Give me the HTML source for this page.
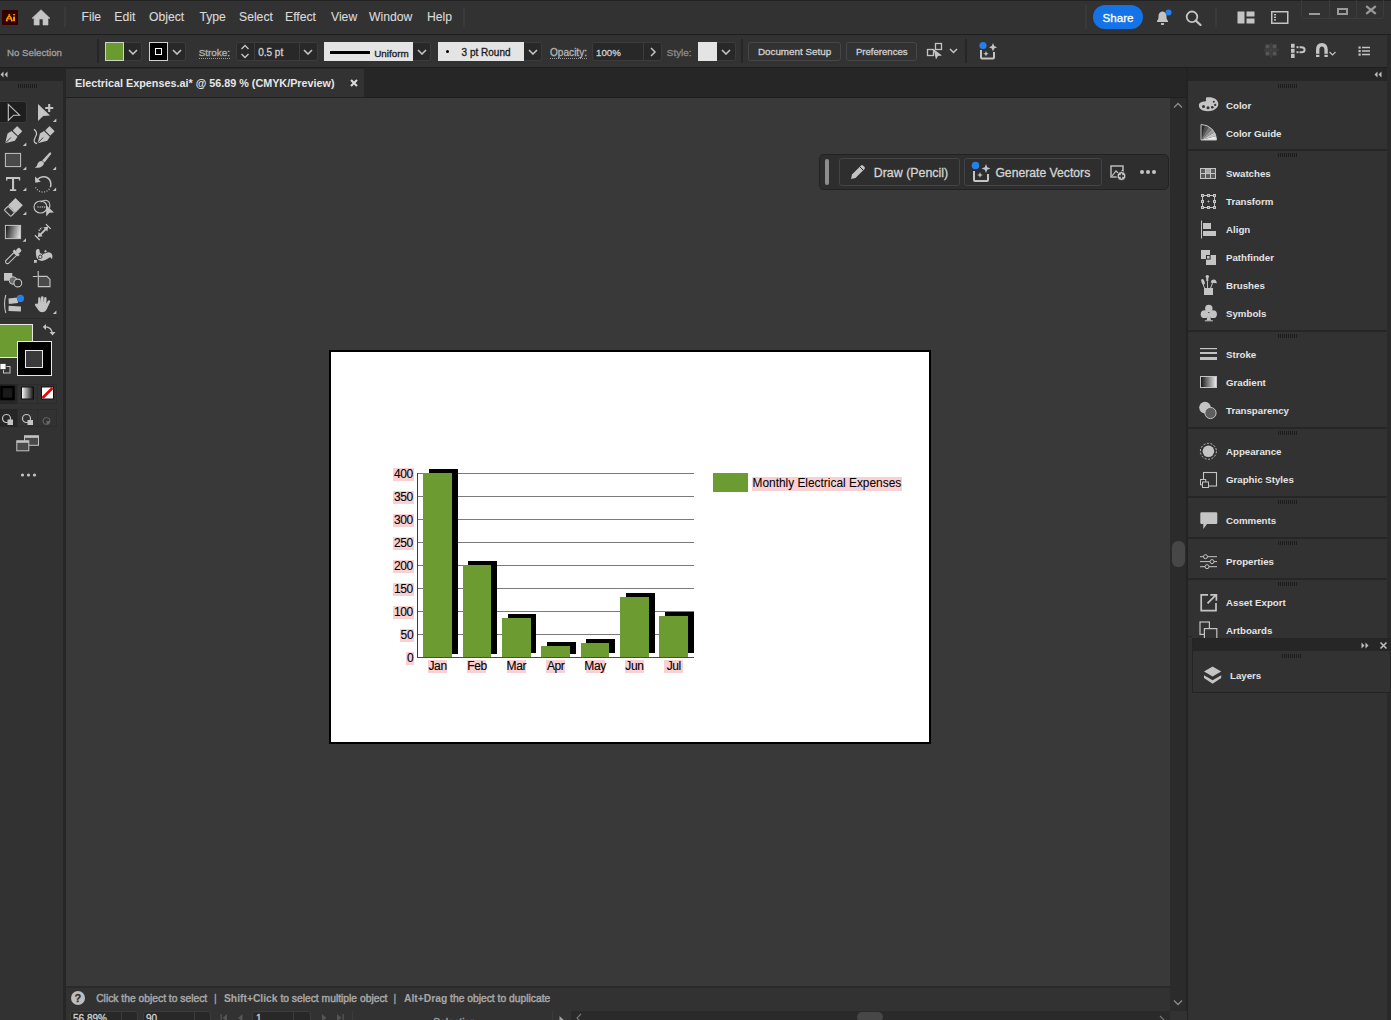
<!DOCTYPE html><html><head><meta charset="utf-8"><style>
html,body{margin:0;padding:0;}
body{width:1391px;height:1020px;overflow:hidden;position:relative;background:#323232;font-family:"Liberation Sans",sans-serif;}
body>div,body>span,body>svg{position:absolute;}
span.u{-webkit-text-stroke:0.3px currentColor;}
span{white-space:nowrap;}
</style></head><body>
<div style="left:0px;top:0px;width:1391px;height:34px;background:#323232;"></div>
<div style="left:0px;top:0px;width:1391px;height:1px;background:#222;"></div>
<div style="left:0px;top:34px;width:1391px;height:1px;background:#1e1e1e;"></div>
<svg style="left:2px;top:10px;" width="16" height="15" viewBox="0 0 16 15"><path d="M1 0 H15 Q16 0 16 1 V14.5 Q16 15 15 15 H1 Q0 15 0 14 V1 Q0 0 1 0 Z" fill="#330000"/><rect x="6.4" y="4.1" width="1.7" height="1.3" fill="#ff9a00"/><path d="M7.25 5.6 L5.2 8.2 L4.6 11.2 M7.25 5.6 L9.3 8.2 L9.9 11.2" fill="none" stroke="#ff9a00" stroke-width="1.5"/><rect x="5.3" y="8.3" width="3.9" height="1.1" fill="#ff9a00"/><rect x="3.8" y="10.2" width="1.8" height="1.1" fill="#ff9a00"/><rect x="8.9" y="10.2" width="1.8" height="1.1" fill="#ff9a00"/><rect x="11.1" y="4.1" width="2" height="1.2" fill="#ff9a00"/><rect x="11.1" y="6.6" width="1.9" height="4.6" fill="#ff9a00"/></svg>
<svg style="left:32px;top:9px;" width="19" height="17" viewBox="0 0 19 17"><path d="M9 0.7 L18 9.3 L16 9.3 L16 16 L11 16 L11 10 L7.2 10 L7.2 16 L2.1 16 L2.1 9.3 L0 9.3 Z" fill="#c4c4c4" stroke="#c4c4c4" stroke-width="0.6" stroke-linejoin="round"/></svg>
<div style="left:64px;top:7px;width:2px;height:20px;background:#3a3a3a;"></div>
<span class="u" style="left:81.5px;top:10.97px;font-size:12.2px;line-height:12.2px;color:#d9d9d9;font-weight:normal;font-family:'Liberation Sans', sans-serif;-webkit-text-stroke:0.12px #d9d9d9;">File</span>
<span class="u" style="left:114.3px;top:10.97px;font-size:12.2px;line-height:12.2px;color:#d9d9d9;font-weight:normal;font-family:'Liberation Sans', sans-serif;-webkit-text-stroke:0.12px #d9d9d9;">Edit</span>
<span class="u" style="left:149px;top:10.97px;font-size:12.2px;line-height:12.2px;color:#d9d9d9;font-weight:normal;font-family:'Liberation Sans', sans-serif;-webkit-text-stroke:0.12px #d9d9d9;">Object</span>
<span class="u" style="left:199.4px;top:10.97px;font-size:12.2px;line-height:12.2px;color:#d9d9d9;font-weight:normal;font-family:'Liberation Sans', sans-serif;-webkit-text-stroke:0.12px #d9d9d9;">Type</span>
<span class="u" style="left:239px;top:10.97px;font-size:12.2px;line-height:12.2px;color:#d9d9d9;font-weight:normal;font-family:'Liberation Sans', sans-serif;-webkit-text-stroke:0.12px #d9d9d9;">Select</span>
<span class="u" style="left:285px;top:10.97px;font-size:12.2px;line-height:12.2px;color:#d9d9d9;font-weight:normal;font-family:'Liberation Sans', sans-serif;-webkit-text-stroke:0.12px #d9d9d9;">Effect</span>
<span class="u" style="left:331px;top:10.97px;font-size:12.2px;line-height:12.2px;color:#d9d9d9;font-weight:normal;font-family:'Liberation Sans', sans-serif;-webkit-text-stroke:0.12px #d9d9d9;">View</span>
<span class="u" style="left:369px;top:10.97px;font-size:12.2px;line-height:12.2px;color:#d9d9d9;font-weight:normal;font-family:'Liberation Sans', sans-serif;-webkit-text-stroke:0.12px #d9d9d9;">Window</span>
<span class="u" style="left:427px;top:10.97px;font-size:12.2px;line-height:12.2px;color:#d9d9d9;font-weight:normal;font-family:'Liberation Sans', sans-serif;-webkit-text-stroke:0.12px #d9d9d9;">Help</span>
<div style="left:1085px;top:5px;width:2px;height:24px;background:#3a3a3a;"></div>
<div style="left:463px;top:7px;width:2px;height:20px;background:#3a3a3a;"></div>
<div style="left:1093px;top:5px;width:50px;height:24px;background:#1473e6;border-radius:12px;"></div>
<span class="u" style="left:1102.6px;top:12.18px;font-size:11.6px;line-height:11.6px;color:#ffffff;font-weight:normal;font-family:'Liberation Sans', sans-serif;">Share</span>
<svg style="left:1154px;top:9px;" width="18" height="17" viewBox="0 0 18 17"><path d="M3 13 L3 12 C4.5 10.5 4.5 9 4.5 7 C4.5 4 6.5 2.5 8.5 2.5 C10.5 2.5 12.5 4 12.5 7 C12.5 9 12.5 10.5 14 12 L14 13 Z" fill="#c4c4c4"/><rect x="6.8" y="14" width="3.4" height="2" rx="1" fill="#c4c4c4"/><circle cx="14.5" cy="3.5" r="3" fill="#2680eb"/></svg>
<svg style="left:1185px;top:10px;" width="18" height="16" viewBox="0 0 18 16"><circle cx="7" cy="6.8" r="5.3" fill="none" stroke="#c4c4c4" stroke-width="1.8"/><path d="M10.8 10.6 L15.5 15" stroke="#c4c4c4" stroke-width="2.2" stroke-linecap="round"/></svg>
<div style="left:1215px;top:7px;width:2px;height:20px;background:#3a3a3a;"></div>
<svg style="left:1237px;top:11px;" width="18" height="13" viewBox="0 0 18 13"><rect x="0.5" y="0.5" width="7" height="12" fill="#c4c4c4"/><rect x="9.5" y="0.5" width="8" height="5" fill="#c4c4c4"/><rect x="9.5" y="7.5" width="8" height="5" fill="#c4c4c4"/></svg>
<svg style="left:1271px;top:11px;" width="18" height="13" viewBox="0 0 18 13"><rect x="0.75" y="0.75" width="16" height="11.5" fill="none" stroke="#c4c4c4" stroke-width="1.5"/><rect x="3" y="3" width="2" height="1.4" fill="#c4c4c4"/><rect x="3" y="5.6" width="2" height="1.4" fill="#c4c4c4"/><rect x="3" y="8.2" width="2" height="1.4" fill="#c4c4c4"/></svg>
<div style="left:1301px;top:-1px;width:83px;height:20px;border:1px solid #3c3c3c;border-top:none;border-radius:0 0 4px 4px;box-sizing:border-box;"></div>
<div style="left:1329px;top:0px;width:1px;height:19px;background:#3c3c3c;"></div>
<div style="left:1356px;top:0px;width:1px;height:19px;background:#3c3c3c;"></div>
<div style="left:1309px;top:12.5px;width:11px;height:2px;background:#9a9a9a;"></div>
<div style="left:1337px;top:8px;width:11px;height:7px;border:2px solid #9a9a9a;box-sizing:border-box;"></div>
<svg style="left:1365px;top:5px;" width="12" height="10" viewBox="0 0 12 10"><path d="M1.2 1.2 L10.8 8.8 M10.8 1.2 L1.2 8.8" stroke="#9a9a9a" stroke-width="2.2"/></svg>
<div style="left:0px;top:35px;width:1391px;height:33px;background:#323232;"></div>
<div style="left:0px;top:67px;width:1391px;height:1px;background:#1e1e1e;"></div>
<div style="left:1387px;top:35px;width:4px;height:33px;background:#2a2a2a;"></div>
<span class="u" style="left:7px;top:47.69px;font-size:9.7px;line-height:9.7px;color:#a0a0a0;font-weight:normal;font-family:'Liberation Sans', sans-serif;">No Selection</span>
<div style="left:97px;top:39px;width:2px;height:24px;background:#262626;"></div>
<div style="left:105px;top:42px;width:19px;height:19px;background:#6a9a30;border:1px solid #d0d0d0;box-sizing:border-box;"></div>
<div style="left:124px;top:42px;width:18px;height:19px;background:#282828;border:1px solid #3c3c3c;border-left:none;border-radius:0 3px 3px 0;box-sizing:border-box;"></div>
<svg style="left:127.5px;top:48.5px;" width="10" height="6" viewBox="0 0 10 6"><path d="M1 1 L5 5 L9 1" fill="none" stroke="#c4c4c4" stroke-width="1.6"/></svg>
<div style="left:149px;top:42px;width:19px;height:19px;background:#000;border:1px solid #d0d0d0;box-sizing:border-box;"></div>
<div style="left:155px;top:48px;width:7px;height:7px;border:1.5px solid #fff;box-sizing:border-box;"></div>
<div style="left:168px;top:42px;width:18px;height:19px;background:#282828;border:1px solid #3c3c3c;border-left:none;border-radius:0 3px 3px 0;box-sizing:border-box;"></div>
<svg style="left:171.5px;top:48.5px;" width="10" height="6" viewBox="0 0 10 6"><path d="M1 1 L5 5 L9 1" fill="none" stroke="#c4c4c4" stroke-width="1.6"/></svg>
<span class="u" style="left:198.7px;top:47.72px;font-size:9.9px;line-height:9.9px;color:#b4b4b4;font-weight:normal;font-family:'Liberation Sans', sans-serif;">Stroke:</span>
<div style="left:199px;top:58px;width:31px;height:1px;border-top:1px dotted #9a9a9a;"></div>
<div style="left:236px;top:42px;width:82px;height:19px;background:#282828;border:1px solid #3c3c3c;border-radius:3px;box-sizing:border-box;"></div>
<div style="left:254px;top:42px;width:1px;height:19px;background:#3c3c3c;"></div>
<div style="left:299px;top:42px;width:1px;height:19px;background:#3c3c3c;"></div>
<svg style="left:240px;top:44px;" width="10" height="15" viewBox="0 0 10 15"><path d="M1.5 5 L5 1.5 L8.5 5 M1.5 10 L5 13.5 L8.5 10" fill="none" stroke="#c4c4c4" stroke-width="1.4"/></svg>
<span class="u" style="left:258.2px;top:47.53px;font-size:10px;line-height:10px;color:#d0d0d0;font-weight:normal;font-family:'Liberation Sans', sans-serif;">0.5 pt</span>
<svg style="left:303px;top:49px;" width="10" height="6" viewBox="0 0 10 6"><path d="M1 1 L5 5 L9 1" fill="none" stroke="#c4c4c4" stroke-width="1.6"/></svg>
<div style="left:324px;top:42px;width:89px;height:19px;background:#e4e4e4;"></div>
<div style="left:330px;top:51px;width:40px;height:3px;background:#000;"></div>
<span class="u" style="left:374.2px;top:48.62px;font-size:9.9px;line-height:9.9px;color:#1a1a1a;font-weight:normal;font-family:'Liberation Sans', sans-serif;">Uniform</span>
<div style="left:413px;top:42px;width:18px;height:19px;background:#282828;border:1px solid #3c3c3c;border-left:none;border-radius:0 3px 3px 0;box-sizing:border-box;"></div>
<svg style="left:416.5px;top:48.5px;" width="10" height="6" viewBox="0 0 10 6"><path d="M1 1 L5 5 L9 1" fill="none" stroke="#c4c4c4" stroke-width="1.6"/></svg>
<div style="left:438px;top:42px;width:86px;height:19px;background:#e4e4e4;"></div>
<div style="left:446px;top:50px;width:3px;height:3px;border-radius:50%;background:#000;"></div>
<span class="u" style="left:461.6px;top:48.03px;font-size:10px;line-height:10px;color:#1a1a1a;font-weight:normal;font-family:'Liberation Sans', sans-serif;">3 pt Round</span>
<div style="left:524px;top:42px;width:18px;height:19px;background:#282828;border:1px solid #3c3c3c;border-left:none;border-radius:0 3px 3px 0;box-sizing:border-box;"></div>
<svg style="left:527.5px;top:48.5px;" width="10" height="6" viewBox="0 0 10 6"><path d="M1 1 L5 5 L9 1" fill="none" stroke="#c4c4c4" stroke-width="1.6"/></svg>
<span class="u" style="left:550px;top:47.55px;font-size:10.1px;line-height:10.1px;color:#b4b4b4;font-weight:normal;font-family:'Liberation Sans', sans-serif;">Opacity:</span>
<div style="left:550px;top:58px;width:37px;height:1px;border-top:1px dotted #9a9a9a;"></div>
<div style="left:592px;top:42px;width:70px;height:19px;background:#282828;border:1px solid #3c3c3c;border-radius:3px;box-sizing:border-box;"></div>
<div style="left:643px;top:42px;width:1px;height:19px;background:#3c3c3c;"></div>
<span class="u" style="left:596px;top:47.79px;font-size:9.7px;line-height:9.7px;color:#d0d0d0;font-weight:normal;font-family:'Liberation Sans', sans-serif;">100%</span>
<svg style="left:649px;top:47px;" width="8" height="10" viewBox="0 0 8 10"><path d="M2 1 L6 5 L2 9" fill="none" stroke="#c4c4c4" stroke-width="1.5"/></svg>
<span class="u" style="left:666.8px;top:47.62px;font-size:9.9px;line-height:9.9px;color:#8c8c8c;font-weight:normal;font-family:'Liberation Sans', sans-serif;">Style:</span>
<div style="left:698px;top:42px;width:19px;height:19px;background:#e4e4e4;"></div>
<div style="left:717px;top:42px;width:19px;height:19px;background:#282828;border:1px solid #3c3c3c;border-left:none;border-radius:0 3px 3px 0;box-sizing:border-box;"></div>
<svg style="left:721.0px;top:48.5px;" width="10" height="6" viewBox="0 0 10 6"><path d="M1 1 L5 5 L9 1" fill="none" stroke="#c4c4c4" stroke-width="1.6"/></svg>
<div style="left:741px;top:39px;width:2px;height:24px;background:#262626;"></div>
<div style="left:748px;top:42px;width:93px;height:19px;border:1px solid #464646;border-radius:3px;box-sizing:border-box;"></div>
<span class="u" style="left:757.9px;top:46.96px;font-size:9.85px;line-height:9.85px;color:#d0d0d0;font-weight:normal;font-family:'Liberation Sans', sans-serif;">Document Setup</span>
<div style="left:846px;top:42px;width:71px;height:19px;border:1px solid #464646;border-radius:3px;box-sizing:border-box;"></div>
<span class="u" style="left:855.9px;top:47.27px;font-size:9.6px;line-height:9.6px;color:#d0d0d0;font-weight:normal;font-family:'Liberation Sans', sans-serif;">Preferences</span>
<svg style="left:926px;top:42px;" width="20" height="18" viewBox="0 0 20 18"><rect x="9.5" y="1.5" width="6" height="6" fill="none" stroke="#c4c4c4" stroke-width="1.3"/><rect x="1.5" y="7.5" width="6" height="6" fill="none" stroke="#c4c4c4" stroke-width="1.3"/><path d="M7.5 7 L16 13.5 L12 14 L10 17.5 Z" fill="#c4c4c4"/></svg>
<svg style="left:949px;top:48px;" width="9" height="6" viewBox="0 0 9 6"><path d="M1 1 L4.5 4.5 L8 1" fill="none" stroke="#c4c4c4" stroke-width="1.5"/></svg>
<div style="left:965px;top:39px;width:2px;height:24px;background:#262626;"></div>
<svg style="left:978px;top:41px;" width="22" height="19" viewBox="0 0 22 19"><path d="M3 9 L3 16.5 Q3 17.5 4 17.5 L15 17.5 Q16 17.5 16 16.5 L16 11" fill="none" stroke="#c4c4c4" stroke-width="2"/><path d="M15 2 L16.2 5 L19 6.2 L16.2 7.4 L15 10.4 L13.8 7.4 L11 6.2 L13.8 5 Z" fill="#c4c4c4"/><path d="M8 10 L8.8 12 L10.8 12.8 L8.8 13.6 L8 15.6 L7.2 13.6 L5.2 12.8 L7.2 12 Z" fill="#c4c4c4"/><circle cx="5" cy="4.5" r="3.6" fill="#2680eb"/></svg>
<svg style="left:1264px;top:43px;" width="15" height="15" viewBox="0 0 15 15"><rect x="1.5" y="1.5" width="4" height="4" fill="#555"/><rect x="8.5" y="1.5" width="4" height="4" fill="#555"/><rect x="1.5" y="8.5" width="4" height="4" fill="#555"/><rect x="8.5" y="8.5" width="4" height="4" fill="#555"/><path d="M0 7 H15 M7 0 V15" stroke="#4a4a4a" stroke-width="1"/></svg>
<svg style="left:1290px;top:43px;" width="16" height="16" viewBox="0 0 16 16"><rect x="1" y="0.8" width="3.6" height="4" fill="#c4c4c4"/><rect x="1" y="5.8" width="3.6" height="4" fill="#c4c4c4"/><rect x="1" y="10.8" width="3.6" height="4.2" fill="#c4c4c4"/><rect x="6.5" y="3.2" width="2" height="2" fill="#c4c4c4"/><rect x="6.5" y="8.2" width="2" height="2" fill="#c4c4c4"/><path d="M9.5 4.2 L11.5 4.2 Q14.6 4.2 14.6 6.7 Q14.6 9.2 11.5 9.2 L9.5 9.2" fill="none" stroke="#c4c4c4" stroke-width="2"/></svg>
<svg style="left:1315px;top:43px;" width="24" height="16" viewBox="0 0 24 16"><path d="M2.7 14 L2.7 7 Q2.7 1.8 6.9 1.8 Q11.1 1.8 11.1 7 L11.1 14" fill="none" stroke="#c4c4c4" stroke-width="3.4"/><rect x="0.5" y="10.8" width="4.4" height="1" fill="#323232"/><rect x="8.9" y="10.8" width="4.4" height="1" fill="#323232"/><path d="M14.5 9 L17.5 12 L20.5 9" fill="none" stroke="#c4c4c4" stroke-width="1.1"/></svg>
<svg style="left:1358px;top:46px;" width="13" height="10" viewBox="0 0 13 10"><rect x="0.5" y="0.5" width="2.2" height="2.2" fill="#c4c4c4"/><rect x="0.5" y="4" width="2.2" height="2.2" fill="#c4c4c4"/><rect x="0.5" y="7.5" width="2.2" height="2.2" fill="#c4c4c4"/><path d="M4 1.5 H12 M4 5 H12 M4 8.5 H12" stroke="#c4c4c4" stroke-width="1.3"/></svg>
<div style="left:0px;top:68px;width:1391px;height:30px;background:#262626;"></div>
<div style="left:66px;top:69px;width:298px;height:28px;background:#323232;"></div>
<span class="" style="left:75px;top:77.86px;font-size:10.8px;line-height:10.8px;color:#e6e6e6;font-weight:bold;font-family:'Liberation Sans', sans-serif;">Electrical Expenses.ai* @ 56.89 % (CMYK/Preview)</span>
<svg style="left:350px;top:79px;" width="8" height="8" viewBox="0 0 8 8"><path d="M1 1 L7 7 M7 1 L1 7" stroke="#dcdcdc" stroke-width="2.1"/></svg>
<div style="left:66px;top:97px;width:1121px;height:1px;background:#1e1e1e;"></div>
<div style="left:0px;top:68px;width:63px;height:13px;background:#262626;"></div>
<div style="left:0px;top:81px;width:63px;height:939px;background:#323232;"></div>
<div style="left:63px;top:68px;width:3px;height:952px;background:#262626;"></div>
<svg style="left:0px;top:71px;" width="8" height="7" viewBox="0 0 8 7"><path d="M3.5 0.5 L0.5 3.5 L3.5 6.5 Z M7.5 0.5 L4.5 3.5 L7.5 6.5 Z" fill="#bdbdbd"/></svg>
<svg style="left:18px;top:84px;" width="20" height="4" viewBox="0 0 20 4"><rect x="0" y="0" width="1" height="4" fill="#1c1c1c"/><rect x="2" y="0" width="1" height="4" fill="#1c1c1c"/><rect x="4" y="0" width="1" height="4" fill="#1c1c1c"/><rect x="6" y="0" width="1" height="4" fill="#1c1c1c"/><rect x="8" y="0" width="1" height="4" fill="#1c1c1c"/><rect x="10" y="0" width="1" height="4" fill="#1c1c1c"/><rect x="12" y="0" width="1" height="4" fill="#1c1c1c"/><rect x="14" y="0" width="1" height="4" fill="#1c1c1c"/><rect x="16" y="0" width="1" height="4" fill="#1c1c1c"/><rect x="18" y="0" width="1" height="4" fill="#1c1c1c"/></svg>
<div style="left:0px;top:101px;width:27px;height:22px;background:#1e1e1e;border:1px solid #3a3a3a;border-left:none;border-radius:0 3px 3px 0;box-sizing:border-box;"></div>
<svg style="left:0px;top:0px;" width="63" height="345" viewBox="0 0 63 345"><path d="M8.3 104.3 L19.6 115.2 L13.6 115.2 L8.3 120.5 Z" fill="none" stroke="#c4c4c4" stroke-width="1.1" stroke-linejoin="miter"/><path d="M38 104 L50 115.5 L43.2 116 L38 121 Z" fill="#c4c4c4"/><path d="M45.2 108 H53.2 M49.2 104 V112" stroke="#c4c4c4" stroke-width="2.1"/><path d="M52.8 122.0 L56.3 118.5 L56.3 122.0 Z" fill="#c4c4c4"/><g transform="translate(5.2,143.2) rotate(45)"><path d="M0 0 L-5.2 -8.5 L-4.2 -13.2 L4.2 -13.2 L5.2 -8.5 Z" fill="#c4c4c4"/><rect x="-3.6" y="-20.5" width="7.2" height="6.2" rx="0.6" fill="#c4c4c4"/><path d="M0 -0.5 L0 -8" stroke="#323232" stroke-width="0.9"/></g><path d="M22.8 145.9 L26.3 142.4 L26.3 145.9 Z" fill="#c4c4c4"/><g transform="translate(32,0)"><g transform="translate(5.6,143.2) rotate(45)"><path d="M0 0 L-5.2 -8.5 L-4.2 -13.2 L4.2 -13.2 L5.2 -8.5 Z" fill="#c4c4c4"/><rect x="-3.6" y="-20.5" width="7.2" height="6.2" rx="0.6" fill="#c4c4c4"/><path d="M0 -0.5 L0 -8" stroke="#323232" stroke-width="0.9"/></g></g><path d="M34 129.3 Q37 131.5 36.5 134.5 Q35 137.5 34.2 140 Q33.8 143 37 143.6" fill="none" stroke="#c4c4c4" stroke-width="1.2"/><rect x="5.4" y="153.4" width="15.2" height="13.2" fill="#4a4a4a" stroke="#c4c4c4" stroke-width="1"/><path d="M22.8 170.1 L26.3 166.6 L26.3 170.1 Z" fill="#c4c4c4"/><path d="M50.8 152.4 Q51.6 153.2 50.9 154.3 L44.6 162.4 L42.2 160.5 L49.4 152.8 Q50.2 152 50.8 152.4 Z" fill="#c4c4c4"/><path d="M42 161 L44 162.8 Q43.8 166.2 40 167.4 Q37.4 168 34.8 167.8 Q37.3 166.4 37.7 163.5 Q38.8 160.4 42 161 Z" fill="#c4c4c4"/><path d="M52.6 170.1 L56.1 166.6 L56.1 170.1 Z" fill="#c4c4c4"/><path d="M6 177 H20.2 V180.6 H18.8 V178.9 H14.1 V189.2 H16.2 V191 H9.9 V189.2 H12 V178.9 H7.4 V180.6 H6 Z" fill="#c4c4c4"/><path d="M22.8 190.9 L26.3 187.4 L26.3 190.9 Z" fill="#c4c4c4"/><path d="M36.5 180.5 Q40 176.5 44.5 176.8 Q50.2 177.6 50.8 183.6 Q51 185.5 50.3 187.2" fill="none" stroke="#c4c4c4" stroke-width="1.5"/><path d="M35 176.5 L35.2 182.7 L40.8 181.8 Z" fill="#c4c4c4"/><path d="M49.5 189 Q46 192.5 42 192 Q38 191.5 35.5 187.5" fill="none" stroke="#c4c4c4" stroke-width="1.2" stroke-dasharray="1 1.6"/><path d="M52.6 190.9 L56.1 187.4 L56.1 190.9 Z" fill="#c4c4c4"/><g transform="translate(13.2,207.6) rotate(45)"><rect x="-5.2" y="-8.4" width="10.4" height="10.4" fill="#c4c4c4"/><rect x="-4.6" y="2.6" width="9.2" height="5.4" rx="0.8" fill="#323232" stroke="#c4c4c4" stroke-width="1.1"/></g><path d="M22.8 215.1 L26.3 211.6 L26.3 215.1 Z" fill="#c4c4c4"/><ellipse cx="40.5" cy="207" rx="6.5" ry="6" fill="none" stroke="#c4c4c4" stroke-width="1.1"/><path d="M40.5 202 Q46 198.5 49 202 Q50.5 205 49.5 208" fill="none" stroke="#c4c4c4" stroke-width="1.1"/><circle cx="38" cy="207" r="0.7" fill="#c4c4c4"/><circle cx="40.2" cy="207" r="0.7" fill="#c4c4c4"/><circle cx="42.4" cy="207" r="0.7" fill="#c4c4c4"/><circle cx="44.6" cy="207" r="0.7" fill="#c4c4c4"/><path d="M46 205 L54 212.5 L49.5 212.7 L46.2 216.6 Z" fill="#c4c4c4"/><defs><linearGradient id="tg" x1="0" y1="0.3" x2="1" y2="0.5"><stop offset="0" stop-color="#1a1a1a"/><stop offset="1" stop-color="#e0e0e0"/></linearGradient></defs><rect x="5.4" y="225.4" width="15.2" height="13.2" fill="url(#tg)" stroke="#c4c4c4" stroke-width="1"/><path d="M22.5 241.7 L26.0 238.2 L26.0 241.7 Z" fill="#c4c4c4"/><path d="M34.9 235.2 L39.7 240 M45.9 224.1 L50.7 228.9" stroke="#c4c4c4" stroke-width="1.3"/><path d="M39.6 235.3 L46.4 228.5" stroke="#c4c4c4" stroke-width="1.8"/><path d="M48.2 226.6 L47.4 231.6 L43.3 227.5 Z M37.8 237.1 L38.6 232.1 L42.7 236.2 Z" fill="#c4c4c4"/><path d="M38.8 230.6 L41.9 227.5" stroke="#c4c4c4" stroke-width="1.6" stroke-dasharray="1.2 0.8"/><g transform="translate(13,256.2) rotate(45)"><rect x="-2.3" y="-10.5" width="4.6" height="5" rx="1.8" fill="#c4c4c4"/><rect x="-3.8" y="-5.8" width="7.6" height="2.6" fill="#c4c4c4"/><path d="M-1.9 -3.2 L1.9 -3.2 L1.9 8.5 Q0 11 -1.9 8.5 Z" fill="none" stroke="#c4c4c4" stroke-width="1.1"/></g><path d="M36.1 250.3 Q37 248.6 38.6 249 Q40 249.6 39.6 251.5 Q39.5 253.2 41.5 253.8 Q44 254 46 252.8 Q49 251.8 50.8 253 Q52.6 254 52.4 256.5 Q52.3 258.5 51.9 259.2 Q51 257.6 50.3 257.2 Q49 257.6 48 258.6 Q45.5 260.6 42 260.9 Q38.5 260.8 37.2 258.8 Q36 256.5 35.9 253.5 Q35.8 251.5 36.1 250.3 Z" fill="#c4c4c4"/><path d="M35.6 261.4 L45.3 251.6" stroke="#323232" stroke-width="0.9"/><circle cx="40.3" cy="256.8" r="1.7" fill="#c4c4c4" stroke="#323232" stroke-width="0.9"/><circle cx="45.5" cy="251.3" r="1.5" fill="#c4c4c4" stroke="#323232" stroke-width="0.8"/><rect x="34" y="260" width="2.8" height="2.8" fill="#c4c4c4"/><rect x="4" y="273" width="8.3" height="7.7" fill="#c4c4c4"/><circle cx="13" cy="280.5" r="3.8" fill="#6a6a6a" stroke="#c4c4c4" stroke-width="1"/><circle cx="17.8" cy="283" r="3.9" fill="#323232" stroke="#c4c4c4" stroke-width="1.1"/><path d="M38.2 271 V276 M32.8 276.5 H37.5" stroke="#c4c4c4" stroke-width="1.1"/><path d="M38.3 276.4 H47 L50 279.4 V286.6 H38.3 Z" fill="#4a4a4a" stroke="#c4c4c4" stroke-width="1.1"/><path d="M5.8 295 Q3.3 304 5.8 313" fill="none" stroke="#c4c4c4" stroke-width="1.1"/><path d="M8.5 298.6 L17.5 297.4 L18 303 L8.8 304 Z M8.6 305.8 L21 306.6 L20.9 311.6 L8.5 311 Z" fill="#c4c4c4"/><circle cx="20.4" cy="298.4" r="3.6" fill="#2680eb"/><path d="M38.2 302 L38.2 298.5 Q38.2 297.3 39.4 297.3 Q40.5 297.3 40.5 298.5 V303 L41 297.5 Q41 296.2 42.3 296.2 Q43.6 296.2 43.6 297.5 V303 L44.2 298 Q44.3 296.9 45.5 296.9 Q46.7 297 46.6 298.2 L46.4 303.8 L47.8 301 Q48.6 299.8 49.7 300.4 Q50.6 301 50 302.3 L46.6 309.6 Q45.5 312.2 42.4 312.2 Q39.5 312.2 38.3 310 L35 305.3 Q34.5 304.2 35.5 303.7 Q36.5 303.3 37.3 304.3 Z" fill="#c4c4c4"/><path d="M52.9 314.0 L56.4 310.5 L56.4 314.0 Z" fill="#c4c4c4"/><rect x="0" y="318" width="58" height="1" fill="#2a2a2a"/><path d="M44 327 Q51 326 52.5 333.5" fill="none" stroke="#c4c4c4" stroke-width="1.3"/><path d="M46 324 L42.8 327 L46 330 Z M49.5 332 L52.5 335.5 L55.5 332 Z" fill="#c4c4c4"/></svg>
<div style="left:0px;top:324px;width:33px;height:34px;background:#6b9b31;border:1px solid #e8e8e8;border-left:none;box-sizing:border-box;"></div>
<div style="left:17px;top:341px;width:35px;height:35px;background:#000;border:1px solid #e8e8e8;box-sizing:border-box;"></div>
<div style="left:25px;top:350px;width:18px;height:18px;background:#3a3a3a;border:1px solid #e8e8e8;box-sizing:border-box;"></div>
<svg style="left:0px;top:363px;" width="11" height="14" viewBox="0 0 11 14"><rect x="3.5" y="3.5" width="6.5" height="6.5" fill="#323232" stroke="#c4c4c4" stroke-width="1"/><rect x="0" y="0.5" width="6" height="6" fill="#fff" stroke="#323232" stroke-width="0.8"/></svg>
<div style="left:0px;top:384px;width:17px;height:20px;background:#262626;"></div>
<div style="left:0px;top:409px;width:17px;height:18px;background:#262626;"></div>
<div style="left:17px;top:384px;width:40px;height:20px;border:1px solid #2c2c2c;box-sizing:border-box;"></div>
<div style="left:17px;top:409px;width:40px;height:18px;border:1px solid #2c2c2c;box-sizing:border-box;"></div>
<div style="left:37px;top:384px;width:1px;height:20px;background:#2c2c2c;"></div>
<div style="left:37px;top:409px;width:1px;height:18px;background:#2c2c2c;"></div>
<svg style="left:0px;top:383px;" width="60" height="48" viewBox="0 0 60 48"><rect x="1.5" y="4" width="12" height="12" fill="#1a1a1a" stroke="#000" stroke-width="2.5"/><defs><linearGradient id="cm" x1="0" y1="0" x2="1" y2="0"><stop offset="0" stop-color="#fff"/><stop offset="1" stop-color="#111"/></linearGradient></defs><rect x="21.5" y="4" width="12" height="12" fill="url(#cm)" stroke="#111" stroke-width="1"/><rect x="41.5" y="4" width="12" height="12" fill="#fff" stroke="#111" stroke-width="1"/><path d="M42.5 15 L52.5 5" stroke="#e00" stroke-width="2.6"/><circle cx="6.5" cy="35.5" r="4" fill="none" stroke="#c4c4c4" stroke-width="1.2"/><rect x="7.5" y="36.5" width="5.5" height="5.5" fill="#c4c4c4"/><circle cx="26.5" cy="35.5" r="4" fill="none" stroke="#c4c4c4" stroke-width="1.2"/><path d="M27.5 37 H33 V42 H27.5 Z" fill="#c4c4c4"/><circle cx="46.5" cy="38" r="3.5" fill="none" stroke="#666" stroke-width="1"/><path d="M46.5 38 H50 A3.5 3.5 0 0 1 46.5 41.5 Z" fill="#666"/></svg>
<svg style="left:16px;top:435px;" width="24" height="17" viewBox="0 0 24 17"><rect x="8.5" y="0.8" width="14" height="9.5" fill="#4a4a4a" stroke="#c4c4c4" stroke-width="1"/><rect x="8.5" y="0.8" width="14" height="2" fill="#c4c4c4"/><rect x="0.8" y="5.8" width="12" height="10" fill="#4a4a4a" stroke="#c4c4c4" stroke-width="1"/><rect x="0.8" y="5.8" width="12" height="2" fill="#c4c4c4"/></svg>
<svg style="left:20px;top:472px;" width="17" height="6" viewBox="0 0 17 6"><circle cx="2.5" cy="3" r="1.6" fill="#c4c4c4"/><circle cx="8.5" cy="3" r="1.6" fill="#c4c4c4"/><circle cx="14.5" cy="3" r="1.6" fill="#c4c4c4"/></svg>
<div style="left:66px;top:98px;width:1104px;height:888px;background:#393939;"></div>
<div style="left:329px;top:350px;width:602px;height:394px;background:#000;"></div>
<div style="left:331px;top:352px;width:598px;height:390px;background:#fff;"></div>
<div style="left:418px;top:634px;width:276px;height:1px;background:#7a7a7a;"></div>
<div style="left:418px;top:611px;width:276px;height:1px;background:#7a7a7a;"></div>
<div style="left:418px;top:588px;width:276px;height:1px;background:#7a7a7a;"></div>
<div style="left:418px;top:565px;width:276px;height:1px;background:#7a7a7a;"></div>
<div style="left:418px;top:542px;width:276px;height:1px;background:#7a7a7a;"></div>
<div style="left:418px;top:519px;width:276px;height:1px;background:#7a7a7a;"></div>
<div style="left:418px;top:496px;width:276px;height:1px;background:#7a7a7a;"></div>
<div style="left:418px;top:473px;width:276px;height:1px;background:#7a7a7a;"></div>
<div style="left:428.90px;top:469.00px;width:28.8px;height:184.50px;background:#000;"></div>
<div style="left:452.20px;top:653.5px;width:5.5px;height:3px;background:#fff;"></div>
<div style="left:423.20px;top:473.00px;width:28.8px;height:184.00px;background:#6b9b31;"></div>
<div style="left:468.27px;top:561.00px;width:28.8px;height:92.50px;background:#000;"></div>
<div style="left:491.57px;top:653.5px;width:5.5px;height:3px;background:#fff;"></div>
<div style="left:462.57px;top:565.00px;width:28.8px;height:92.00px;background:#6b9b31;"></div>
<div style="left:507.64px;top:613.90px;width:28.8px;height:39.60px;background:#000;"></div>
<div style="left:530.94px;top:653.5px;width:5.5px;height:3px;background:#fff;"></div>
<div style="left:501.94px;top:617.90px;width:28.8px;height:39.10px;background:#6b9b31;"></div>
<div style="left:547.01px;top:641.50px;width:28.8px;height:12.00px;background:#000;"></div>
<div style="left:570.31px;top:653.5px;width:5.5px;height:3px;background:#fff;"></div>
<div style="left:541.31px;top:645.50px;width:28.8px;height:11.50px;background:#6b9b31;"></div>
<div style="left:586.38px;top:639.20px;width:28.8px;height:14.30px;background:#000;"></div>
<div style="left:609.68px;top:653.5px;width:5.5px;height:3px;background:#fff;"></div>
<div style="left:580.68px;top:643.20px;width:28.8px;height:13.80px;background:#6b9b31;"></div>
<div style="left:625.75px;top:593.20px;width:28.8px;height:60.30px;background:#000;"></div>
<div style="left:649.05px;top:653.5px;width:5.5px;height:3px;background:#fff;"></div>
<div style="left:620.05px;top:597.20px;width:28.8px;height:59.80px;background:#6b9b31;"></div>
<div style="left:665.12px;top:611.60px;width:28.8px;height:41.90px;background:#000;"></div>
<div style="left:688.42px;top:653.5px;width:5.5px;height:3px;background:#fff;"></div>
<div style="left:659.42px;top:615.60px;width:28.8px;height:41.40px;background:#6b9b31;"></div>
<div style="left:417px;top:473px;width:1.2px;height:185px;background:#3c3c3c;"></div>
<div style="left:417px;top:656.5px;width:277px;height:1.2px;background:#4a4a4a;"></div>
<div style="left:406.30px;top:652.00px;width:7.5px;height:13px;background:#f9d0d3;"></div>
<span style="left:406.30px;top:652.34px;width:7.5px;text-align:center;font-size:12px;line-height:12px;color:#000;letter-spacing:-0.35px;-webkit-text-stroke:0.1px #000;">0</span>
<div style="left:400.00px;top:629.00px;width:13.8px;height:13px;background:#f9d0d3;"></div>
<span style="left:400.00px;top:629.34px;width:13.8px;text-align:center;font-size:12px;line-height:12px;color:#000;letter-spacing:-0.35px;-webkit-text-stroke:0.1px #000;">50</span>
<div style="left:393.10px;top:606.00px;width:20.7px;height:13px;background:#f9d0d3;"></div>
<span style="left:393.10px;top:606.34px;width:20.7px;text-align:center;font-size:12px;line-height:12px;color:#000;letter-spacing:-0.35px;-webkit-text-stroke:0.1px #000;">100</span>
<div style="left:393.10px;top:583.00px;width:20.7px;height:13px;background:#f9d0d3;"></div>
<span style="left:393.10px;top:583.34px;width:20.7px;text-align:center;font-size:12px;line-height:12px;color:#000;letter-spacing:-0.35px;-webkit-text-stroke:0.1px #000;">150</span>
<div style="left:393.10px;top:560.00px;width:20.7px;height:13px;background:#f9d0d3;"></div>
<span style="left:393.10px;top:560.34px;width:20.7px;text-align:center;font-size:12px;line-height:12px;color:#000;letter-spacing:-0.35px;-webkit-text-stroke:0.1px #000;">200</span>
<div style="left:393.10px;top:537.00px;width:20.7px;height:13px;background:#f9d0d3;"></div>
<span style="left:393.10px;top:537.34px;width:20.7px;text-align:center;font-size:12px;line-height:12px;color:#000;letter-spacing:-0.35px;-webkit-text-stroke:0.1px #000;">250</span>
<div style="left:393.10px;top:514.00px;width:20.7px;height:13px;background:#f9d0d3;"></div>
<span style="left:393.10px;top:514.34px;width:20.7px;text-align:center;font-size:12px;line-height:12px;color:#000;letter-spacing:-0.35px;-webkit-text-stroke:0.1px #000;">300</span>
<div style="left:393.10px;top:491.00px;width:20.7px;height:13px;background:#f9d0d3;"></div>
<span style="left:393.10px;top:491.34px;width:20.7px;text-align:center;font-size:12px;line-height:12px;color:#000;letter-spacing:-0.35px;-webkit-text-stroke:0.1px #000;">350</span>
<div style="left:393.10px;top:468.00px;width:20.7px;height:13px;background:#f9d0d3;"></div>
<span style="left:393.10px;top:468.34px;width:20.7px;text-align:center;font-size:12px;line-height:12px;color:#000;letter-spacing:-0.35px;-webkit-text-stroke:0.1px #000;">400</span>
<div style="left:428.10px;top:660px;width:19px;height:13px;background:#f9d0d3;"></div>
<span style="left:422.60px;top:660.24px;width:30px;text-align:center;font-size:12px;line-height:12px;color:#000;letter-spacing:-0.4px;-webkit-text-stroke:0.1px #000;">Jan</span>
<div style="left:467.47px;top:660px;width:19px;height:13px;background:#f9d0d3;"></div>
<span style="left:461.97px;top:660.24px;width:30px;text-align:center;font-size:12px;line-height:12px;color:#000;letter-spacing:-0.4px;-webkit-text-stroke:0.1px #000;">Feb</span>
<div style="left:506.84px;top:660px;width:19px;height:13px;background:#f9d0d3;"></div>
<span style="left:501.34px;top:660.24px;width:30px;text-align:center;font-size:12px;line-height:12px;color:#000;letter-spacing:-0.4px;-webkit-text-stroke:0.1px #000;">Mar</span>
<div style="left:546.21px;top:660px;width:19px;height:13px;background:#f9d0d3;"></div>
<span style="left:540.71px;top:660.24px;width:30px;text-align:center;font-size:12px;line-height:12px;color:#000;letter-spacing:-0.4px;-webkit-text-stroke:0.1px #000;">Apr</span>
<div style="left:585.58px;top:660px;width:19px;height:13px;background:#f9d0d3;"></div>
<span style="left:580.08px;top:660.24px;width:30px;text-align:center;font-size:12px;line-height:12px;color:#000;letter-spacing:-0.4px;-webkit-text-stroke:0.1px #000;">May</span>
<div style="left:624.95px;top:660px;width:19px;height:13px;background:#f9d0d3;"></div>
<span style="left:619.45px;top:660.24px;width:30px;text-align:center;font-size:12px;line-height:12px;color:#000;letter-spacing:-0.4px;-webkit-text-stroke:0.1px #000;">Jun</span>
<div style="left:664.32px;top:660px;width:19px;height:13px;background:#f9d0d3;"></div>
<span style="left:658.82px;top:660.24px;width:30px;text-align:center;font-size:12px;line-height:12px;color:#000;letter-spacing:-0.4px;-webkit-text-stroke:0.1px #000;">Jul</span>
<div style="left:713px;top:473px;width:35px;height:18.6px;background:#6b9b31;"></div>
<div style="left:752px;top:477px;width:150px;height:14px;background:#f9d0d3;"></div>
<span class="" style="left:752.5px;top:477.93px;font-size:11.9px;line-height:11.9px;color:#000;font-weight:normal;font-family:'Liberation Sans', sans-serif;-webkit-text-stroke:0.05px #000;">Monthly Electrical Expenses</span>
<div style="left:1170px;top:98px;width:17px;height:913px;background:#2b2b2b;"></div>
<div style="left:1186px;top:68px;width:2px;height:952px;background:#232323;"></div>
<div style="left:66px;top:986px;width:1104px;height:2px;background:#2a2a2a;"></div>
<div style="left:66px;top:988px;width:1104px;height:23px;background:#323232;"></div>
<div style="left:1170px;top:1011px;width:17px;height:9px;background:#323232;"></div>
<div style="left:1188px;top:68px;width:200px;height:13px;background:#262626;"></div>
<div style="left:1188px;top:81px;width:199px;height:939px;background:#323232;"></div>
<div style="left:1387px;top:68px;width:4px;height:952px;background:#2a2a2a;"></div>
<svg style="left:1194px;top:90px;" width="30" height="548" viewBox="0 0 30 548"><g transform="translate(-1194,-90)"><path d="M1207 97.3 C1212.5 96.5 1218.3 99 1218.3 104 C1218.3 108.7 1213 111.2 1208 111.2 C1202 111.2 1198.9 108.7 1198.9 105.6 C1198.9 102.6 1202 101.6 1204.5 101.6 C1205.9 101.6 1206.4 100.6 1206 99.6 C1205.7 98.6 1206 97.5 1207 97.3 Z" fill="#c4c4c4"/><circle cx="1203.5" cy="106.4" r="1.5" fill="#323232"/><circle cx="1208" cy="107.7" r="1.5" fill="#323232"/><circle cx="1212.3" cy="107.2" r="1.3" fill="#323232"/><circle cx="1215.2" cy="104.9" r="1.1" fill="#323232"/><circle cx="1213.8" cy="101.7" r="1" fill="#323232"/><path d="M1201 140 L1216.50 140.00 A15.5 15.5 0 0 0 1215.97 135.99 Z" fill="rgb(235,235,235)"/><path d="M1201 140 L1215.97 135.99 A15.5 15.5 0 0 0 1214.42 132.25 Z" fill="rgb(197,197,197)"/><path d="M1201 140 L1214.42 132.25 A15.5 15.5 0 0 0 1211.96 129.04 Z" fill="rgb(159,159,159)"/><path d="M1201 140 L1211.96 129.04 A15.5 15.5 0 0 0 1208.75 126.58 Z" fill="rgb(121,121,121)"/><path d="M1201 140 L1208.75 126.58 A15.5 15.5 0 0 0 1205.01 125.03 Z" fill="rgb(83,83,83)"/><path d="M1201 140 L1205.01 125.03 A15.5 15.5 0 0 0 1201.00 124.50 Z" fill="rgb(45,45,45)"/><path d="M1201 124.5 L1201 140 L1216.5 140 A15.5 15.5 0 0 0 1201 124.5 Z" fill="none" stroke="#c4c4c4" stroke-width="1"/><rect x="1200" y="168" width="16" height="11" fill="#c4c4c4"/><rect x="1201" y="169" width="4" height="4" fill="#5a5a5a"/><rect x="1206" y="169" width="4" height="4" fill="#a8a8a8"/><rect x="1211" y="169" width="4" height="4" fill="#5a5a5a"/><rect x="1201" y="174" width="4" height="4" fill="#5a5a5a"/><rect x="1206" y="174" width="4" height="4" fill="#5a5a5a"/><rect x="1211" y="174" width="4" height="4" fill="#5a5a5a"/><rect x="1202.5" y="195.5" width="12" height="12" fill="none" stroke="#c4c4c4" stroke-width="1"/><rect x="1201" y="194" width="3" height="3" fill="#c4c4c4"/><rect x="1202" y="195" width="1" height="1" fill="#777"/><rect x="1201" y="200" width="3" height="3" fill="#c4c4c4"/><rect x="1202" y="201" width="1" height="1" fill="#777"/><rect x="1201" y="206" width="3" height="3" fill="#c4c4c4"/><rect x="1202" y="207" width="1" height="1" fill="#777"/><rect x="1207" y="194" width="3" height="3" fill="#c4c4c4"/><rect x="1208" y="195" width="1" height="1" fill="#777"/><rect x="1207" y="206" width="3" height="3" fill="#c4c4c4"/><rect x="1208" y="207" width="1" height="1" fill="#777"/><rect x="1213" y="194" width="3" height="3" fill="#c4c4c4"/><rect x="1214" y="195" width="1" height="1" fill="#777"/><rect x="1213" y="200" width="3" height="3" fill="#c4c4c4"/><rect x="1214" y="201" width="1" height="1" fill="#777"/><rect x="1213" y="206" width="3" height="3" fill="#c4c4c4"/><rect x="1214" y="207" width="1" height="1" fill="#777"/><path d="M1207.5 201.5 H1209.5 M1208.5 200.5 V202.5" stroke="#c4c4c4" stroke-width="0.8"/><rect x="1201" y="220.5" width="1" height="18" fill="#c4c4c4"/><rect x="1203" y="223" width="8" height="6" fill="#c4c4c4"/><rect x="1203" y="231" width="13" height="5" fill="#c4c4c4"/><rect x="1201" y="250" width="9" height="9" fill="#c4c4c4"/><rect x="1206" y="255" width="10" height="10" fill="#c4c4c4"/><rect x="1206.5" y="255.5" width="3.6" height="3.6" fill="none" stroke="#2a2a2a" stroke-width="1"/><rect x="1204" y="288" width="9" height="7" fill="#c4c4c4"/><path d="M1204.5 288 L1203 284 M1207.6 288 L1207.3 278 M1210.6 288 L1212.5 283" stroke="#c4c4c4" stroke-width="1"/><ellipse cx="1203" cy="281.8" rx="1.6" ry="3" transform="rotate(-20 1203 281.8)" fill="#c4c4c4"/><circle cx="1207.3" cy="276.6" r="1.7" fill="#c4c4c4"/><rect x="1206.3" y="277.5" width="2" height="3.5" fill="#c4c4c4"/><path d="M1210.8 282.8 Q1211 279.5 1213.8 279.5 Q1216.5 279.8 1216.8 283.2 Z" fill="#c4c4c4"/><circle cx="1208.8" cy="308.4" r="3.7" fill="#c4c4c4"/><circle cx="1204.6" cy="314.2" r="3.9" fill="#c4c4c4"/><circle cx="1213" cy="314.2" r="3.9" fill="#c4c4c4"/><path d="M1208 313 L1206.6 320.4 L1211 320.4 L1209.6 313 Z" fill="#c4c4c4"/><rect x="1204.8" y="320.3" width="8.1" height="1" fill="#c4c4c4"/><rect x="1200" y="348" width="17" height="1.2" fill="#c4c4c4"/><rect x="1200" y="352" width="17" height="2" fill="#c4c4c4"/><rect x="1200" y="357" width="17" height="3" fill="#c4c4c4"/><defs><linearGradient id="pg" x1="0" y1="0" x2="1" y2="0"><stop offset="0" stop-color="#111"/><stop offset="1" stop-color="#f0f0f0"/></linearGradient></defs><rect x="1200.5" y="376.5" width="16" height="11" fill="url(#pg)" stroke="#c4c4c4" stroke-width="1"/><circle cx="1205" cy="407.6" r="5.8" fill="#c4c4c4"/><circle cx="1210.5" cy="413" r="5.6" fill="#5e5e5e" stroke="#c4c4c4" stroke-width="1"/><circle cx="1208.4" cy="451.3" r="8" fill="none" stroke="#c4c4c4" stroke-width="1" stroke-dasharray="2 1.6"/><circle cx="1208.4" cy="451.3" r="5.8" fill="#c4c4c4"/><rect x="1203.5" y="472.5" width="13" height="13.5" fill="none" stroke="#c4c4c4" stroke-width="1.1"/><rect x="1200.5" y="479.5" width="5.2" height="5.3" fill="#323232" stroke="#c4c4c4" stroke-width="1"/><rect x="1202.5" y="482" width="6" height="5.5" fill="#323232" stroke="#c4c4c4" stroke-width="1"/><path d="M1200.3 513.6 Q1200.3 512.3 1201.6 512.3 L1216 512.3 Q1217.3 512.3 1217.3 513.6 L1217.3 522.7 Q1217.3 524 1216 524 L1207 524 L1203.3 529 L1203.3 524 L1201.6 524 Q1200.3 524 1200.3 522.7 Z" fill="#c4c4c4"/><path d="M1200 556.7 H1217 M1200 561.6 H1217 M1200 566.7 H1217" stroke="#c4c4c4" stroke-width="1"/><circle cx="1205.5" cy="556.7" r="2" fill="#323232" stroke="#c4c4c4" stroke-width="1"/><circle cx="1212" cy="561.6" r="2" fill="#323232" stroke="#c4c4c4" stroke-width="1"/><circle cx="1207" cy="566.7" r="2" fill="#323232" stroke="#c4c4c4" stroke-width="1"/><path d="M1208 594.8 L1201.2 594.8 L1201.2 610.6 L1216 610.6 L1216 603" fill="none" stroke="#c4c4c4" stroke-width="1.7"/><path d="M1207.5 603.3 L1216 594.8 M1210.3 594.8 L1216.4 594.8 L1216.4 600.8" fill="none" stroke="#c4c4c4" stroke-width="1.7"/><rect x="1200" y="622" width="9.4" height="12.4" fill="none" stroke="#c4c4c4" stroke-width="1.2"/><rect x="1204.4" y="628.6" width="12.4" height="12" fill="#323232" stroke="#c4c4c4" stroke-width="1.2"/></g></svg>
<svg style="left:1278px;top:84px;" width="20" height="4" viewBox="0 0 20 4"><rect x="0" y="0" width="1" height="4" fill="#1c1c1c"/><rect x="2" y="0" width="1" height="4" fill="#1c1c1c"/><rect x="4" y="0" width="1" height="4" fill="#1c1c1c"/><rect x="6" y="0" width="1" height="4" fill="#1c1c1c"/><rect x="8" y="0" width="1" height="4" fill="#1c1c1c"/><rect x="10" y="0" width="1" height="4" fill="#1c1c1c"/><rect x="12" y="0" width="1" height="4" fill="#1c1c1c"/><rect x="14" y="0" width="1" height="4" fill="#1c1c1c"/><rect x="16" y="0" width="1" height="4" fill="#1c1c1c"/><rect x="18" y="0" width="1" height="4" fill="#1c1c1c"/></svg>
<span class="" style="left:1226px;top:100.69px;font-size:9.7px;line-height:9.7px;color:#e4e4e4;font-weight:bold;font-family:'Liberation Sans', sans-serif;">Color</span>
<span class="" style="left:1226px;top:128.69px;font-size:9.7px;line-height:9.7px;color:#e4e4e4;font-weight:bold;font-family:'Liberation Sans', sans-serif;">Color Guide</span>
<div style="left:1188px;top:149px;width:199px;height:2px;background:#262626;"></div>
<svg style="left:1278px;top:153px;" width="20" height="4" viewBox="0 0 20 4"><rect x="0" y="0" width="1" height="4" fill="#1c1c1c"/><rect x="2" y="0" width="1" height="4" fill="#1c1c1c"/><rect x="4" y="0" width="1" height="4" fill="#1c1c1c"/><rect x="6" y="0" width="1" height="4" fill="#1c1c1c"/><rect x="8" y="0" width="1" height="4" fill="#1c1c1c"/><rect x="10" y="0" width="1" height="4" fill="#1c1c1c"/><rect x="12" y="0" width="1" height="4" fill="#1c1c1c"/><rect x="14" y="0" width="1" height="4" fill="#1c1c1c"/><rect x="16" y="0" width="1" height="4" fill="#1c1c1c"/><rect x="18" y="0" width="1" height="4" fill="#1c1c1c"/></svg>
<span class="" style="left:1226px;top:169.19px;font-size:9.7px;line-height:9.7px;color:#e4e4e4;font-weight:bold;font-family:'Liberation Sans', sans-serif;">Swatches</span>
<span class="" style="left:1226px;top:197.19px;font-size:9.7px;line-height:9.7px;color:#e4e4e4;font-weight:bold;font-family:'Liberation Sans', sans-serif;">Transform</span>
<span class="" style="left:1226px;top:225.19px;font-size:9.7px;line-height:9.7px;color:#e4e4e4;font-weight:bold;font-family:'Liberation Sans', sans-serif;">Align</span>
<span class="" style="left:1226px;top:253.19px;font-size:9.7px;line-height:9.7px;color:#e4e4e4;font-weight:bold;font-family:'Liberation Sans', sans-serif;">Pathfinder</span>
<span class="" style="left:1226px;top:281.19px;font-size:9.7px;line-height:9.7px;color:#e4e4e4;font-weight:bold;font-family:'Liberation Sans', sans-serif;">Brushes</span>
<span class="" style="left:1226px;top:309.19px;font-size:9.7px;line-height:9.7px;color:#e4e4e4;font-weight:bold;font-family:'Liberation Sans', sans-serif;">Symbols</span>
<div style="left:1188px;top:330px;width:199px;height:2px;background:#262626;"></div>
<svg style="left:1278px;top:334px;" width="20" height="4" viewBox="0 0 20 4"><rect x="0" y="0" width="1" height="4" fill="#1c1c1c"/><rect x="2" y="0" width="1" height="4" fill="#1c1c1c"/><rect x="4" y="0" width="1" height="4" fill="#1c1c1c"/><rect x="6" y="0" width="1" height="4" fill="#1c1c1c"/><rect x="8" y="0" width="1" height="4" fill="#1c1c1c"/><rect x="10" y="0" width="1" height="4" fill="#1c1c1c"/><rect x="12" y="0" width="1" height="4" fill="#1c1c1c"/><rect x="14" y="0" width="1" height="4" fill="#1c1c1c"/><rect x="16" y="0" width="1" height="4" fill="#1c1c1c"/><rect x="18" y="0" width="1" height="4" fill="#1c1c1c"/></svg>
<span class="" style="left:1226px;top:350.19px;font-size:9.7px;line-height:9.7px;color:#e4e4e4;font-weight:bold;font-family:'Liberation Sans', sans-serif;">Stroke</span>
<span class="" style="left:1226px;top:378.19px;font-size:9.7px;line-height:9.7px;color:#e4e4e4;font-weight:bold;font-family:'Liberation Sans', sans-serif;">Gradient</span>
<span class="" style="left:1226px;top:406.19px;font-size:9.7px;line-height:9.7px;color:#e4e4e4;font-weight:bold;font-family:'Liberation Sans', sans-serif;">Transparency</span>
<div style="left:1188px;top:427px;width:199px;height:2px;background:#262626;"></div>
<svg style="left:1278px;top:431px;" width="20" height="4" viewBox="0 0 20 4"><rect x="0" y="0" width="1" height="4" fill="#1c1c1c"/><rect x="2" y="0" width="1" height="4" fill="#1c1c1c"/><rect x="4" y="0" width="1" height="4" fill="#1c1c1c"/><rect x="6" y="0" width="1" height="4" fill="#1c1c1c"/><rect x="8" y="0" width="1" height="4" fill="#1c1c1c"/><rect x="10" y="0" width="1" height="4" fill="#1c1c1c"/><rect x="12" y="0" width="1" height="4" fill="#1c1c1c"/><rect x="14" y="0" width="1" height="4" fill="#1c1c1c"/><rect x="16" y="0" width="1" height="4" fill="#1c1c1c"/><rect x="18" y="0" width="1" height="4" fill="#1c1c1c"/></svg>
<span class="" style="left:1226px;top:447.19px;font-size:9.7px;line-height:9.7px;color:#e4e4e4;font-weight:bold;font-family:'Liberation Sans', sans-serif;">Appearance</span>
<span class="" style="left:1226px;top:475.19px;font-size:9.7px;line-height:9.7px;color:#e4e4e4;font-weight:bold;font-family:'Liberation Sans', sans-serif;">Graphic Styles</span>
<div style="left:1188px;top:496px;width:199px;height:2px;background:#262626;"></div>
<svg style="left:1278px;top:500px;" width="20" height="4" viewBox="0 0 20 4"><rect x="0" y="0" width="1" height="4" fill="#1c1c1c"/><rect x="2" y="0" width="1" height="4" fill="#1c1c1c"/><rect x="4" y="0" width="1" height="4" fill="#1c1c1c"/><rect x="6" y="0" width="1" height="4" fill="#1c1c1c"/><rect x="8" y="0" width="1" height="4" fill="#1c1c1c"/><rect x="10" y="0" width="1" height="4" fill="#1c1c1c"/><rect x="12" y="0" width="1" height="4" fill="#1c1c1c"/><rect x="14" y="0" width="1" height="4" fill="#1c1c1c"/><rect x="16" y="0" width="1" height="4" fill="#1c1c1c"/><rect x="18" y="0" width="1" height="4" fill="#1c1c1c"/></svg>
<span class="" style="left:1226px;top:516.19px;font-size:9.7px;line-height:9.7px;color:#e4e4e4;font-weight:bold;font-family:'Liberation Sans', sans-serif;">Comments</span>
<div style="left:1188px;top:537px;width:199px;height:2px;background:#262626;"></div>
<svg style="left:1278px;top:541px;" width="20" height="4" viewBox="0 0 20 4"><rect x="0" y="0" width="1" height="4" fill="#1c1c1c"/><rect x="2" y="0" width="1" height="4" fill="#1c1c1c"/><rect x="4" y="0" width="1" height="4" fill="#1c1c1c"/><rect x="6" y="0" width="1" height="4" fill="#1c1c1c"/><rect x="8" y="0" width="1" height="4" fill="#1c1c1c"/><rect x="10" y="0" width="1" height="4" fill="#1c1c1c"/><rect x="12" y="0" width="1" height="4" fill="#1c1c1c"/><rect x="14" y="0" width="1" height="4" fill="#1c1c1c"/><rect x="16" y="0" width="1" height="4" fill="#1c1c1c"/><rect x="18" y="0" width="1" height="4" fill="#1c1c1c"/></svg>
<span class="" style="left:1226px;top:557.19px;font-size:9.7px;line-height:9.7px;color:#e4e4e4;font-weight:bold;font-family:'Liberation Sans', sans-serif;">Properties</span>
<div style="left:1188px;top:578px;width:199px;height:2px;background:#262626;"></div>
<svg style="left:1278px;top:582px;" width="20" height="4" viewBox="0 0 20 4"><rect x="0" y="0" width="1" height="4" fill="#1c1c1c"/><rect x="2" y="0" width="1" height="4" fill="#1c1c1c"/><rect x="4" y="0" width="1" height="4" fill="#1c1c1c"/><rect x="6" y="0" width="1" height="4" fill="#1c1c1c"/><rect x="8" y="0" width="1" height="4" fill="#1c1c1c"/><rect x="10" y="0" width="1" height="4" fill="#1c1c1c"/><rect x="12" y="0" width="1" height="4" fill="#1c1c1c"/><rect x="14" y="0" width="1" height="4" fill="#1c1c1c"/><rect x="16" y="0" width="1" height="4" fill="#1c1c1c"/><rect x="18" y="0" width="1" height="4" fill="#1c1c1c"/></svg>
<span class="" style="left:1226px;top:598.19px;font-size:9.7px;line-height:9.7px;color:#e4e4e4;font-weight:bold;font-family:'Liberation Sans', sans-serif;">Asset Export</span>
<span class="" style="left:1226px;top:626.19px;font-size:9.7px;line-height:9.7px;color:#e4e4e4;font-weight:bold;font-family:'Liberation Sans', sans-serif;">Artboards</span>
<div style="left:1188px;top:636px;width:4px;height:1px;background:#262626;"></div>
<div style="left:1192px;top:638px;width:199px;height:55px;background:#323232;border:1px solid #242424;box-sizing:border-box;"></div>
<div style="left:1193px;top:639px;width:198px;height:12px;background:#262626;"></div>
<svg style="left:1361px;top:642px;" width="8" height="7" viewBox="0 0 8 7"><path d="M0.5 0.5 L3.5 3.5 L0.5 6.5 Z M4.5 0.5 L7.5 3.5 L4.5 6.5 Z" fill="#bdbdbd"/></svg>
<svg style="left:1379px;top:641px;" width="9" height="9" viewBox="0 0 9 9"><path d="M1.5 1.5 L7.5 7.5 M7.5 1.5 L1.5 7.5" stroke="#bdbdbd" stroke-width="1.6"/></svg>
<svg style="left:1282px;top:654px;" width="20" height="4" viewBox="0 0 20 4"><rect x="0" y="0" width="1" height="4" fill="#1c1c1c"/><rect x="2" y="0" width="1" height="4" fill="#1c1c1c"/><rect x="4" y="0" width="1" height="4" fill="#1c1c1c"/><rect x="6" y="0" width="1" height="4" fill="#1c1c1c"/><rect x="8" y="0" width="1" height="4" fill="#1c1c1c"/><rect x="10" y="0" width="1" height="4" fill="#1c1c1c"/><rect x="12" y="0" width="1" height="4" fill="#1c1c1c"/><rect x="14" y="0" width="1" height="4" fill="#1c1c1c"/><rect x="16" y="0" width="1" height="4" fill="#1c1c1c"/><rect x="18" y="0" width="1" height="4" fill="#1c1c1c"/></svg>
<svg style="left:1203px;top:665px;" width="20" height="20" viewBox="0 0 20 20"><path d="M9.6 1.5 L18.2 6.5 L9.6 11.5 L1 6.5 Z" fill="#c4c4c4"/><path d="M1 10.2 L9.6 15.2 L18.2 10.2 L18.2 13 L9.6 18.8 L1 13 Z" fill="#c4c4c4"/></svg>
<span class="" style="left:1230px;top:670.99px;font-size:9.7px;line-height:9.7px;color:#e4e4e4;font-weight:bold;font-family:'Liberation Sans', sans-serif;">Layers</span>
<div style="left:819px;top:154px;width:350px;height:36px;background:#2e2e2e;border:1px solid #222;border-radius:5px;box-sizing:border-box;"></div>
<div style="left:825px;top:159px;width:4px;height:26px;background:#8e8e8e;border-radius:2px;"></div>
<div style="left:839px;top:158px;width:121px;height:28px;border:1px solid #444;border-radius:3px;box-sizing:border-box;"></div>
<svg style="left:849px;top:163px;" width="18" height="18" viewBox="0 0 18 18"><path d="M2 16 L3 11.5 L12 2.5 Q13 1.5 14 2.5 L15.5 4 Q16.5 5 15.5 6 L6.5 15 Z" fill="#c4c4c4"/><path d="M11 4 L14 7" stroke="#2e2e2e" stroke-width="1"/></svg>
<span class="u" style="left:873.8px;top:166.90px;font-size:12.4px;line-height:12.4px;color:#d4d4d4;font-weight:normal;font-family:'Liberation Sans', sans-serif;">Draw (Pencil)</span>
<div style="left:964px;top:158px;width:138px;height:28px;border:1px solid #444;border-radius:3px;box-sizing:border-box;"></div>
<svg style="left:970px;top:161px;" width="22" height="22" viewBox="0 0 22 22"><path d="M4 10 L4 19 Q4 20 5 20 L17 20 Q18 20 18 19 L18 13" fill="none" stroke="#c4c4c4" stroke-width="2"/><path d="M16 3 L17.2 6.3 L20.5 7.5 L17.2 8.7 L16 12 L14.8 8.7 L11.5 7.5 L14.8 6.3 Z" fill="#c4c4c4"/><path d="M10 11 L10.8 13.2 L13 14 L10.8 14.8 L10 17 L9.2 14.8 L7 14 L9.2 13.2 Z" fill="#c4c4c4"/><circle cx="5.5" cy="4.5" r="3.8" fill="#2680eb"/></svg>
<span class="u" style="left:995.4px;top:167.07px;font-size:12.2px;line-height:12.2px;color:#d4d4d4;font-weight:normal;font-family:'Liberation Sans', sans-serif;">Generate Vectors</span>
<svg style="left:1110px;top:164px;" width="17" height="17" viewBox="0 0 17 17"><rect x="1" y="2" width="12" height="11" fill="none" stroke="#c4c4c4" stroke-width="1.4"/><path d="M2 12 L6 7 L9 10 L13 6" fill="none" stroke="#c4c4c4" stroke-width="1.2"/><circle cx="11.5" cy="12" r="4.5" fill="#c4c4c4" stroke="#2e2e2e" stroke-width="1"/><path d="M11.5 9.5 V14.5 M9 12 H14" stroke="#2e2e2e" stroke-width="1.4"/></svg>
<svg style="left:1139px;top:169px;" width="18" height="6" viewBox="0 0 18 6"><circle cx="3" cy="3" r="2" fill="#c4c4c4"/><circle cx="9" cy="3" r="2" fill="#c4c4c4"/><circle cx="15" cy="3" r="2" fill="#c4c4c4"/></svg>
<svg style="left:1173px;top:102px;" width="10" height="7" viewBox="0 0 10 7"><path d="M1 5.5 L5 1.5 L9 5.5" fill="none" stroke="#8a8a8a" stroke-width="1.3"/></svg>
<div style="left:1172px;top:541px;width:13px;height:26px;background:#474747;border-radius:6px;"></div>
<svg style="left:1173px;top:999px;" width="10" height="7" viewBox="0 0 10 7"><path d="M1 1.5 L5 5.5 L9 1.5" fill="none" stroke="#8a8a8a" stroke-width="1.3"/></svg>
<svg style="left:1374px;top:71px;" width="8" height="7" viewBox="0 0 8 7"><path d="M3.5 0.5 L0.5 3.5 L3.5 6.5 Z M7.5 0.5 L4.5 3.5 L7.5 6.5 Z" fill="#bdbdbd"/></svg>
<div style="left:71px;top:991px;width:14px;height:14px;border-radius:50%;background:#bdbdbd;"></div>
<span class="u" style="left:74.6px;top:992.99px;font-size:11px;line-height:11px;color:#323232;font-weight:bold;font-family:'Liberation Sans', sans-serif;">?</span>
<span class="u" style="left:96.2px;top:994.08px;font-size:10.3px;line-height:10.3px;color:#a6a6a6;font-weight:normal;font-family:'Liberation Sans', sans-serif;-webkit-text-stroke:0.45px #a6a6a6;">Click the object to select</span>
<span class="u" style="left:214px;top:994.08px;font-size:10.3px;line-height:10.3px;color:#a6a6a6;font-weight:normal;font-family:'Liberation Sans', sans-serif;">|</span>
<span class="u" style="left:224px;top:994.08px;font-size:10.3px;line-height:10.3px;color:#a6a6a6;font-weight:normal;font-family:'Liberation Sans', sans-serif;-webkit-text-stroke:0.45px #a6a6a6;"><b style="-webkit-text-stroke:0.1px">Shift+Click</b> to select multiple object</span>
<span class="u" style="left:393.5px;top:994.08px;font-size:10.3px;line-height:10.3px;color:#a6a6a6;font-weight:normal;font-family:'Liberation Sans', sans-serif;">|</span>
<span class="u" style="left:404px;top:994.08px;font-size:10.3px;line-height:10.3px;color:#a6a6a6;font-weight:normal;font-family:'Liberation Sans', sans-serif;-webkit-text-stroke:0.45px #a6a6a6;"><b style="-webkit-text-stroke:0.1px">Alt+Drag</b> the object to duplicate</span>
<div style="left:66px;top:1011px;width:1104px;height:9px;background:#323232;"></div>
<div style="left:70px;top:1011px;width:68px;height:14px;background:#282828;border:1px solid #3c3c3c;border-radius:3px;box-sizing:border-box;"></div>
<div style="left:121px;top:1011px;width:1px;height:9px;background:#3c3c3c;"></div>
<div style="left:143px;top:1011px;width:68px;height:14px;background:#282828;border:1px solid #3c3c3c;border-radius:3px;box-sizing:border-box;"></div>
<div style="left:194px;top:1011px;width:1px;height:9px;background:#3c3c3c;"></div>
<div style="left:252px;top:1011px;width:59px;height:14px;background:#282828;border:1px solid #3c3c3c;border-radius:3px;box-sizing:border-box;"></div>
<div style="left:293px;top:1011px;width:1px;height:9px;background:#3c3c3c;"></div>
<span class="u" style="left:73px;top:1013.53px;font-size:10px;line-height:10px;color:#d0d0d0;font-weight:normal;font-family:'Liberation Sans', sans-serif;">56.89%</span>
<span class="u" style="left:146px;top:1013.53px;font-size:10px;line-height:10px;color:#d0d0d0;font-weight:normal;font-family:'Liberation Sans', sans-serif;">90</span>
<span class="u" style="left:256px;top:1013.53px;font-size:10px;line-height:10px;color:#d0d0d0;font-weight:normal;font-family:'Liberation Sans', sans-serif;">1</span>
<svg style="left:219px;top:1013px;" width="30" height="8" viewBox="0 0 30 8"><rect x="1.5" y="1" width="1.3" height="7" fill="#555"/><path d="M8 1 L3.5 5 L8 8 Z M23.5 1 L19 5 L23.5 8 Z" fill="#555"/></svg>
<svg style="left:318px;top:1013px;" width="30" height="8" viewBox="0 0 30 8"><path d="M4 1 L8.5 5 L4 8 Z M19 1 L23.5 5 L19 8 Z" fill="#555"/><rect x="24.5" y="1" width="1.3" height="7" fill="#555"/></svg>
<div style="left:352px;top:1011px;width:1px;height:9px;background:#3c3c3c;"></div>
<span class="u" style="left:433px;top:1016.61px;font-size:10.5px;line-height:10.5px;color:#a6a6a6;font-weight:normal;font-family:'Liberation Sans', sans-serif;">Selection</span>
<div style="left:552px;top:1011px;width:1px;height:9px;background:#3c3c3c;"></div>
<svg style="left:558px;top:1015px;" width="10" height="8" viewBox="0 0 10 8"><path d="M1.5 1 L8 7 L1.5 9 Z" fill="#a0a0a0"/></svg>
<div style="left:571px;top:1011px;width:599px;height:9px;background:#2a2a2a;"></div>
<svg style="left:575px;top:1013px;" width="8" height="8" viewBox="0 0 8 8"><path d="M6 1 L2 5 L6 9" fill="none" stroke="#777" stroke-width="1.2"/></svg>
<div style="left:857px;top:1012px;width:26px;height:10px;background:#474747;border-radius:5px;"></div>
<svg style="left:1158px;top:1015px;" width="8" height="8" viewBox="0 0 8 8"><path d="M2 1 L6 5 L2 9" fill="none" stroke="#777" stroke-width="1.2"/></svg>
</body></html>
